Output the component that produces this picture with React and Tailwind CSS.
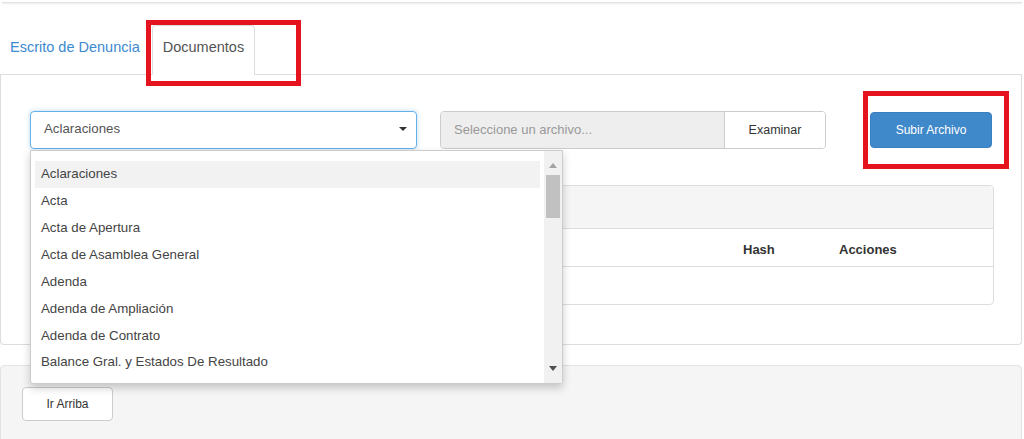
import { useState } from "react";

const opciones = [
  "Aclaraciones",
  "Acta",
  "Acta de Apertura",
  "Acta de Asamblea General",
  "Adenda",
  "Adenda de Ampliación",
  "Adenda de Contrato",
  "Balance Gral. y Estados De Resultado",
];

export default function App() {
  const [seleccion] = useState(0);

  return (
    <div className="relative w-[1024px] h-[439px] overflow-hidden bg-white text-[#333] font-['Liberation_Sans',Arial,sans-serif]">
      {/* barra superior */}
      <div className="h-[3px] mx-[2px] border-b border-[#e3e3e3] shadow-[0_1px_2px_rgba(0,0,0,0.08)]" />

      {/* pestañas */}
      <div className="flex items-end h-[72px] w-[1022px] border-b border-[#ddd]">
        <a className="flex items-center h-[49px] px-[10px] pb-[3px] text-[14.5px] text-[#3c8ad0] mr-[2px]">
          Escrito de Denuncia
        </a>
        <div className="flex items-center h-[50px] -mb-px px-[10px] pb-[4px] w-[103px] bg-white border border-[#ddd] border-b-white rounded-t text-[14.5px] text-[#555]">
          Documentos
        </div>
      </div>

      {/* panel principal */}
      <div className="w-[1022px] h-[270px] border-x border-b border-[#ddd] rounded-b px-[29px] pt-[36px]">
        <div className="flex items-start">
          <div className="flex items-center justify-between w-[387px] h-[38px] pl-[13px] pr-[8px] pb-[3px] border border-[#66afe9] rounded-[4px] shadow-[0_0_4px_rgba(102,175,233,0.5)] text-[13.3px] text-[#555]">
            <span>Aclaraciones</span>
            <svg width="10" height="6" viewBox="0 0 10 6">
              <path d="M1 1h8L5 5z" fill="#333" />
            </svg>
          </div>

          <div className="flex ml-[23px] w-[386px] h-[38px] border border-[#ccc] rounded-[4px] overflow-hidden text-[13px]">
            <div className="flex items-center flex-1 bg-[#eee] pl-[13px] text-[#999] border-r border-[#ccc]">
              Seleccione un archivo...
            </div>
            <div className="flex items-center justify-center w-[100px] bg-white text-[12.5px] text-[#333]">
              Examinar
            </div>
          </div>

          <button className="ml-[44px] mt-[1px] w-[122px] h-[36px] rounded-[4px] bg-[#3f88c9] border border-[#3a7fc0] text-white text-[12px]">
            Subir Archivo
          </button>
        </div>

        {/* tabla */}
        <div className="mt-[36px] w-[964px] border border-[#ddd] rounded-[4px] overflow-hidden">
          <div className="h-[43px] bg-[#f5f5f5] border-b border-[#ddd]" />
          <div className="relative h-[38px] border-b border-[#ddd] text-[13px] font-bold text-[#333]">
            <span className="absolute left-[712px] top-[11px]">Hash</span>
            <span className="absolute left-[808px] top-[11px]">Acciones</span>
          </div>
          <div className="h-[37px]" />
        </div>
      </div>

      {/* panel inferior */}
      <div className="mt-[20px] w-[1022px] h-[80px] bg-[#f5f5f5] border border-[#e3e3e3] rounded-[4px] pl-[21px] pt-[21px]">
        <button className="w-[91px] h-[34px] bg-white border border-[#ccc] rounded-[4px] text-[12px] text-[#333]">
          Ir Arriba
        </button>
      </div>

      {/* lista desplegable */}
      <div className="absolute left-[30px] top-[150px] w-[533px] h-[234px] bg-white border border-[#ccc] rounded-b-[3px] shadow-[0_4px_8px_rgba(0,0,0,0.2)] flex overflow-hidden">
        <ul className="flex-1 pl-[4px] pr-[4px] pt-[10px]">
          {opciones.map((o, i) => (
            <li
              key={o}
              className={`h-[26.86px] flex items-center pl-[6px] text-[13.3px] text-[#444] ${
                i === seleccion ? "bg-[#f2f2f2]" : ""
              }`}
            >
              {o}
            </li>
          ))}
        </ul>
        <div className="relative w-[18px] h-full bg-[#f1f1f1]">
          <svg className="absolute left-[5px] top-[12px]" width="8" height="5" viewBox="0 0 8 5">
            <path d="M0 5L4 0L8 5z" fill="#a3a3a3" />
          </svg>
          <div className="absolute left-[2px] top-[24px] w-[14px] h-[43px] bg-[#c1c1c1]" />
          <svg className="absolute left-[5px] top-[215px]" width="8" height="5" viewBox="0 0 8 5">
            <path d="M0 0L8 0L4 5z" fill="#505050" />
          </svg>
        </div>
      </div>

      {/* recuadros rojos */}
      <div className="absolute left-[146px] top-[20px] w-[155px] h-[66px] border-[5px] border-[#e5131e]" />
      <div className="absolute left-[863px] top-[91px] w-[146px] h-[78px] border-[5px] border-[#e5131e]" />
    </div>
  );
}
